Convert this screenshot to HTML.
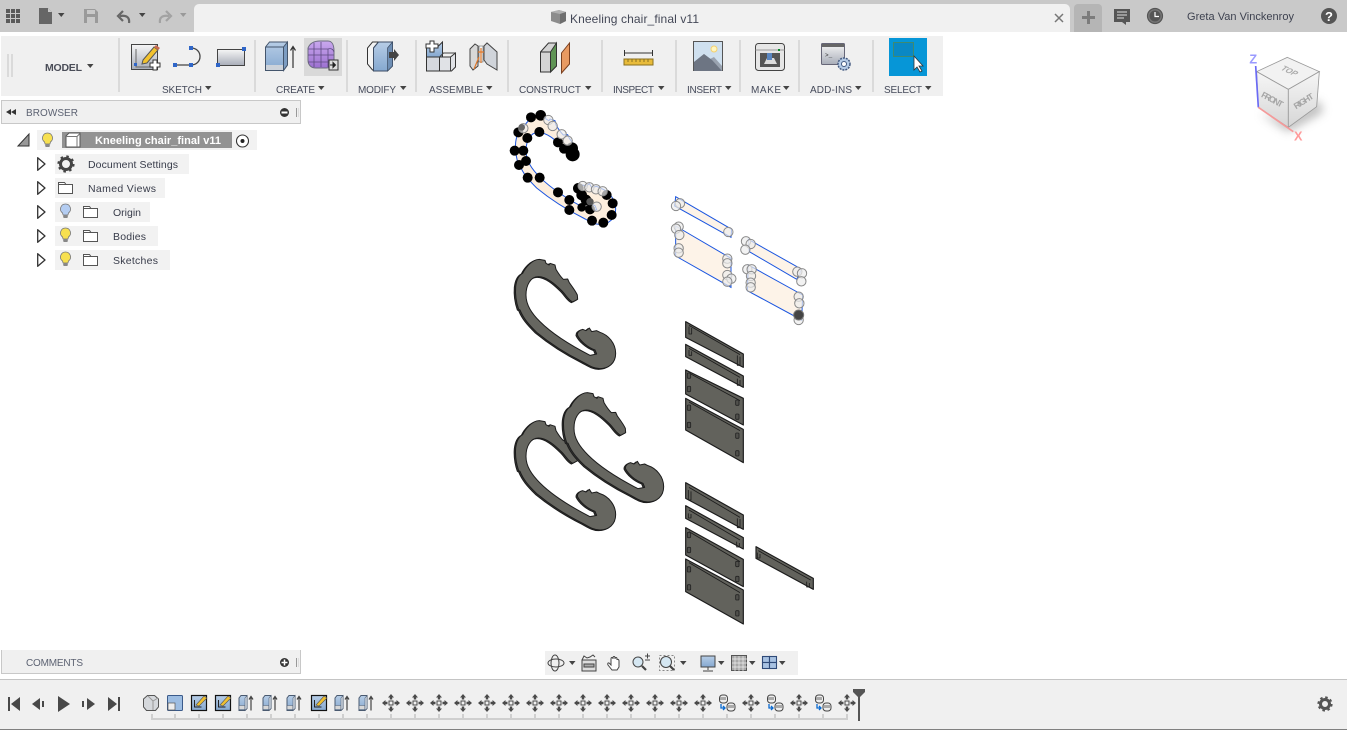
<!DOCTYPE html>
<html><head><meta charset="utf-8"><title>Kneeling chair_final v11</title>
<style>
html,body{margin:0;padding:0;background:#fff;width:1347px;height:730px;overflow:hidden}
svg{display:block;font-family:"Liberation Sans",sans-serif}
.l{font-size:10px;fill:#454a5a}
.t{font-size:10.5px;fill:#383c4a}
</style></head><body>
<svg width="1347" height="730" viewBox="0 0 1347 730" xmlns="http://www.w3.org/2000/svg">
<defs>
<linearGradient id="bl" x1="0" y1="0" x2="0" y2="1"><stop offset="0" stop-color="#b7cde6"/><stop offset="1" stop-color="#85a8d0"/></linearGradient>
<linearGradient id="gr" x1="0" y1="0" x2="0" y2="1"><stop offset="0" stop-color="#f6f6f6"/><stop offset="1" stop-color="#a8adb8"/></linearGradient>
<linearGradient id="pu" x1="0" y1="0" x2="0" y2="1"><stop offset="0" stop-color="#c9a8ee"/><stop offset="1" stop-color="#9c70d0"/></linearGradient>
<linearGradient id="cu" x1="0" y1="0" x2="0" y2="1"><stop offset="0" stop-color="#f6f6f6"/><stop offset="1" stop-color="#d6d6d6"/></linearGradient>
<filter id="bl4" x="-40%" y="-40%" width="180%" height="180%"><feGaussianBlur stdDeviation="14"/></filter>
<path id="c" stroke-linejoin="round" d="M118 478L135 481 138 490 147 495 150 490 165 495 168 508C175 520 182 530 190 538L203 537 208 548C218 562 226 572 232 585L233 598 218 606C205 600 198 585 185 572C165 552 140 530 115 530C92 530 78 555 78 585C78 615 95 640 120 665C150 695 200 730 270 766L290 762 285 750C262 742 240 722 232 705C232 695 240 690 248 688L258 692 268 684 275 695 290 692 300 697C325 705 347 730 347 760C347 790 325 806 300 806C280 806 265 795 250 787C200 762 150 730 110 697C85 672 70 655 60 630L56 628C48 605 45 585 47 560C50 535 58 525 68 520C75 505 95 478 118 478Z"/>
<g id="bulb"><path d="M0-7a5 5 0 0 1 3 9l-.6 2h-4.800l-.6-2a5 5 0 0 1 3-9z" stroke="#777" stroke-width=".8"/><rect x="-2.300" y="4" width="4.600" height="3" rx="1" fill="#888"/></g>
<path id="folder" fill="#fff" stroke="#555" d="M.5 1.500h6l1.500 2h6.500v9h-14z M.5 3.500h7.500"/>
<path id="tri" fill="#fff" stroke="#333" stroke-width="1.300" stroke-linejoin="round" d="M.7.700L8 7 .7 13.300z"/>
<path id="cr" fill="#444" d="M0 0h6.500l-3.250 4z"/>
<g id="mv" fill="#4a4a4a"><path d="M0-9l3 3.500h-1.800v2h-2.400v-2h-1.800z"/><path d="M0 9l3-3.500h-1.800v-2h-2.400v2h-1.800z"/><path d="M-9 0l3.500-3v1.800h2v2.400h-2v1.800z"/><path d="M9 0l-3.500-3v1.800h-2v2.400h2v1.800z"/><rect x="-2" y="-2" width="4" height="4" fill="none" stroke="#4a4a4a"/></g>
<g id="ex"><path d="M-7-5l2-2.500h6v13l-2 2h-6z" fill="url(#bl)" stroke="#4a5a70"/><path d="M-7 2.500h6v4h-6z" fill="#d8d8d8" stroke="#4a5a70" stroke-width=".6"/><path d="M-1-5l2-2.500v13l-2 2z" fill="#e0e6ee" stroke="#4a5a70" stroke-width=".6"/><path d="M5 7.500v-14m-2 3l2-3 2 3" fill="none" stroke="#444" stroke-width="1.200"/></g>
<g id="sk"><rect x="-7.500" y="-7.500" width="15" height="15" fill="url(#bl)" stroke="#111" stroke-width="1.200"/><path d="M-4.500-3v7h7" fill="none" stroke="#222"/><path d="M-3 2L5-7l3 2-8 8z" fill="#f0c030" stroke="#555" stroke-width=".6"/></g>
<g id="jt"><rect x="-7.500" y="-9" width="8" height="8" rx="3" fill="#eee" stroke="#444"/><rect x="-7" y="-7" width="6" height="3" fill="#aaa"/><rect x="0" y="-1" width="8" height="8" rx="3" fill="#eee" stroke="#444"/><rect x="1" y="1" width="6" height="3" fill="#aaa"/><path d="M-6 0v4h4m-2-2l2 2-2 2" fill="none" stroke="#0a6ad0" stroke-width="1.300"/></g>
<g id="sc"><circle r="14" fill="#ececec" fill-opacity=".7" stroke="#8a8a8a" stroke-width="3"/></g>
<g id="h"><rect x="-5" y="-8" width="10" height="16" rx="3" fill="#50504c" stroke="#222" stroke-width="2.500"/></g>
</defs>

<!-- title bar -->
<rect width="1347" height="32" fill="#c9c9c9"/>
<g fill="#5a5a5a"><rect x="6" y="9" width="4" height="4"/><rect x="11" y="9" width="4" height="4"/><rect x="16" y="9" width="4" height="4"/><rect x="6" y="14" width="4" height="4"/><rect x="11" y="14" width="4" height="4"/><rect x="16" y="14" width="4" height="4"/><rect x="6" y="19" width="4" height="4"/><rect x="11" y="19" width="4" height="4"/><rect x="16" y="19" width="4" height="4"/></g>
<path d="M39 8h9l4 4v12H39z" fill="#666"/><path d="M48 8v4h4" fill="#c9c9c9"/>
<use href="#cr" x="58" y="13" fill="#555"/>
<path d="M84 9h11l3 3v11H84z" fill="#9a9a9a"/><rect x="87" y="10" width="8" height="4" fill="#c9c9c9"/><rect x="87" y="17" width="8" height="6" fill="#c9c9c9"/>
<path d="M129 23c1-6-3-8-9-7m3-5l-5 5 5 5" fill="none" stroke="#666" stroke-width="2.200"/><use href="#cr" x="139" y="13"/>
<path d="M160 23c-1-6 3-8 9-7m-3-5l5 5-5 5" fill="none" stroke="#a2a2a2" stroke-width="2.200"/><path d="M180 13h6.500l-3.250 4z" fill="#999"/>
<path d="M194 32V9a5 5 0 0 1 5-5h866a5 5 0 0 1 5 5v23z" fill="#f1f1f1"/>
<path d="M551 12l8-2 7 2v9l-6 3-9-3z" fill="#8c8c8c"/><path d="M551 12l9 2 6-2-7-2z" fill="#b0b0b0"/><path d="M560 14v10l6-3v-9z" fill="#6d6d6d"/>
<text x="570" y="23" font-size="12" fill="#444857" textLength="129">Kneeling chair_final v11</text>
<path d="M1055 14l8 8m0-8l-8 8" stroke="#777" stroke-width="1.500"/>
<path d="M1074 32V8a4 4 0 0 1 4-4h20a4 4 0 0 1 4 4v24z" fill="#b5b5b5"/>
<path d="M1082 17.500h13M1088.500 11v13" stroke="#7c7c7c" stroke-width="3"/>
<path d="M1114 9h16v13h-4v3l-4-3h-8z" fill="#555"/><path d="M1117 12h10M1117 15h10M1117 18h7" stroke="#ddd"/>
<circle cx="1155" cy="16" r="7.500" fill="#777" stroke="#555" stroke-width="1.200"/><circle cx="1155" cy="16" r="5.500" fill="#555"/><path d="M1155 12v4.500h4" fill="none" stroke="#fff" stroke-width="1.200"/>
<text x="1187" y="20" font-size="11" fill="#3e4250" textLength="107">Greta Van Vinckenroy</text>
<circle cx="1329" cy="16" r="8" fill="#555"/><text x="1329" y="21" font-size="13" font-weight="bold" fill="#fff" text-anchor="middle">?</text>

<!-- toolbar -->
<rect x="1" y="36" width="942" height="60" fill="#f0f0f0"/>
<path d="M8 54v23M12 54v23" stroke="#c4c4c4"/>
<text x="45" y="71" font-size="10.500" font-weight="bold" fill="#4a4d58" textLength="37">MODEL</text><use href="#cr" x="87" y="64" fill="#333"/>
<g fill="#dadada"><rect x="118" y="38" width="2" height="54"/><rect x="254" y="40" width="2" height="52"/><rect x="346" y="40" width="2" height="52"/><rect x="415" y="40" width="2" height="52"/><rect x="507" y="40" width="2" height="52"/><rect x="601" y="40" width="2" height="52"/><rect x="675" y="40" width="2" height="52"/><rect x="739" y="40" width="2" height="52"/><rect x="798" y="40" width="2" height="52"/><rect x="872" y="40" width="2" height="52"/></g>

<g class="l">
<text class="l" x="162" y="93" textLength="40">SKETCH</text><use href="#cr" x="205" y="86"/>
<text class="l" x="276" y="93" textLength="39">CREATE</text><use href="#cr" x="318" y="86"/>
<text class="l" x="358" y="93" textLength="38">MODIFY</text><use href="#cr" x="400" y="86"/>
<text class="l" x="429" y="93" textLength="54">ASSEMBLE</text><use href="#cr" x="486" y="86"/>
<text class="l" x="519" y="93" textLength="62">CONSTRUCT</text><use href="#cr" x="585" y="86"/>
<text class="l" x="613" y="93" textLength="41">INSPECT</text><use href="#cr" x="658" y="86"/>
<text class="l" x="687" y="93" textLength="35">INSERT</text><use href="#cr" x="725" y="86"/>
<text class="l" x="751" y="93" textLength="30">MAKE</text><use href="#cr" x="783" y="86"/>
<text class="l" x="810" y="93" textLength="42">ADD-INS</text><use href="#cr" x="855" y="86"/>
<text class="l" x="884" y="93" textLength="38">SELECT</text><use href="#cr" x="925" y="86"/>
</g>

<!-- sketch icons -->
<rect x="131.500" y="44.500" width="26" height="25" fill="url(#gr)" stroke="#444"/>
<path d="M136 49v18h17" fill="none" stroke="#666"/><rect x="134" y="63" width="3" height="3" fill="#2f66c8"/>
<path d="M143 60l11-13 4 3-11 13-5 1z" fill="#f2c22e" stroke="#555"/><path d="M154 47l2-2 4 3-2 2z" fill="#c86a50"/>
<path d="M150 63h3v-3h4v3h3v4h-3v3h-4v-3h-3z" fill="#fff" stroke="#333"/>
<path d="M175 65h16M191 48c12 0 12 17 0 17" fill="none" stroke="#444" stroke-width="1.300"/>
<g fill="#2f66c8"><rect x="173" y="63" width="4" height="4"/><rect x="189" y="63" width="4" height="4"/><rect x="189" y="46" width="4" height="4"/></g>
<rect x="217.500" y="49.500" width="27" height="16" fill="url(#gr)" stroke="#444"/>
<rect x="216" y="63" width="4" height="4" fill="#2f66c8"/><rect x="242" y="47" width="4" height="4" fill="#2f66c8"/>

<!-- create icons -->
<path d="M265.500 47l4-5h18v23l-4 5.500h-18z" fill="url(#bl)" stroke="#44556c"/>
<path d="M283.500 47l4-5v23l-4 5.500z" fill="#7d9dc2" stroke="#44556c"/><path d="M265.500 47h18" stroke="#44556c"/>
<rect x="266" y="65" width="17" height="5" fill="#ccd2da"/>
<path d="M293 68V47m-2.500 3.500l2.500-4 2.500 4" fill="none" stroke="#333" stroke-width="1.200"/>
<rect x="304" y="38" width="38" height="38" fill="#d9d9d9"/>
<path d="M308 48c2-5 6-7 12-7h8c4 0 6 4 6 10v10c0 5-4 7-8 7h-10c-5 0-8-3-8-8z" fill="url(#pu)" stroke="#6d6d80"/>
<path d="M308 49h20v18M308 55h20M308 62h20M314 43v24M321 42v25M328 49c3-1 5 0 6 3M328 55h6M328 62h5" fill="none" stroke="#5d4a80" stroke-width=".8"/>
<rect x="329" y="60" width="9" height="10" fill="#ddd" stroke="#333"/><path d="M330 65h4m-1-2.500l2.500 2.500-2.500 2.500z" fill="#222" stroke="#222"/>

<!-- modify -->
<path d="M367.500 64V48l5-6h6l-5 6v22h-1z" fill="#f4f4f4" stroke="#333"/>
<path d="M373.500 48l5-6h14v24l-5 5h-14z" fill="url(#bl)" stroke="#3d4d65"/><path d="M387.500 48l5-6v24l-5 5z" fill="#6f8fb5" stroke="#3d4d65" stroke-width=".7"/>
<path d="M389 52h5v-3l5 6-5 6v-3h-5z" fill="#444"/>

<!-- assemble -->
<path d="M426.500 57V47h11l5-5v15z" fill="url(#bl)" stroke="#333"/>
<path d="M426.500 57h13v14h-13z" fill="#d5d8de" stroke="#333"/><path d="M439.500 57h11l5-4v14l-4 4h-12z" fill="#e0e2e6" stroke="#333"/>
<path d="M439.500 57l4-4h12M450.500 57v14" fill="none" stroke="#444"/>
<path d="M426 44h4v-3h4v3h4v4h-4v4h-4v-4h-4z" fill="#fff" stroke="#333"/>
<path d="M470 49l5-5 3 2v20l-5 4-3-4z" fill="#d8d8d8" stroke="#444"/><path d="M484 60v-14l3-3 10 9v18l-10-6z" fill="#d0d4da" stroke="#444"/>
<path d="M479 46h4v16h-4z" fill="#f4f4f4" stroke="#555" stroke-width=".6"/>
<path d="M481 48v15M478 52h6M479 57l-5 12" stroke="#e0782a" stroke-width="1.200" fill="none"/>

<!-- construct -->
<path d="M540.500 52l8-9h8v23l-6 6h-10z" fill="#d4d4d4" stroke="#333"/><path d="M550.500 52h-10" stroke="#333"/>
<path d="M550.500 52l6-9v23l-6 6z" fill="#5f9455" stroke="#333"/>
<path d="M561.500 53l8-10v21l-8 9z" fill="#e89a62" stroke="#7a4020"/>

<!-- inspect -->
<path d="M624.500 50v6M652.500 50v6M624.500 53h28" stroke="#333" fill="none"/>
<rect x="624" y="59" width="29" height="6" fill="#e8bb3a" stroke="#8a7020"/>
<path d="M628 59v3M632 59v3M636 59v3M640 59v3M644 59v3M648 59v3" stroke="#8a7020"/>

<!-- insert -->
<rect x="693.500" y="41.500" width="29" height="29" fill="#cfe0ef" stroke="#555"/>
<path d="M694 71V62l10-8 6 5 4-2 8 9v5z" fill="#9aa3b0"/><path d="M694 71V62l10-8 8 6 10 11z" fill="#6d7583"/>
<circle cx="714" cy="49" r="3" fill="#fff6c0" stroke="#f4d070"/>

<!-- make -->
<rect x="755.500" y="43.500" width="29" height="27" rx="3" fill="#e6e6e6" stroke="#444"/><path d="M755.500 50h29" stroke="#999"/>
<rect x="760" y="53" width="20" height="14" fill="#555"/><path d="M764 64l3-6h7l3 6z" fill="#ddd"/><rect x="767" y="53" width="5" height="7" fill="#5a86c0"/><rect x="778" y="49" width="2" height="2" fill="#0a8a2a"/>

<!-- add-ins -->
<rect x="821.500" y="43.500" width="23" height="21" rx="1" fill="url(#gr)" stroke="#667"/><rect x="822" y="44" width="22" height="3" fill="#666"/>
<text x="825" y="57" font-size="6" fill="#333" font-family="Liberation Mono">&gt;_</text>
<circle cx="844" cy="64" r="6" fill="#b5cbe6" stroke="#445a80" stroke-width="1.500" stroke-dasharray="2 1"/><circle cx="844" cy="64" r="2.500" fill="#fff" stroke="#445a80"/>

<!-- select -->
<rect x="889" y="38" width="38" height="38" fill="#0696d7"/>
<rect x="893.500" y="42.500" width="20" height="14" fill="#0a88c4" stroke="#3f8a70"/>
<path d="M914 56v14l3-3 3 5 2-1-3-5h4z" fill="#fff" stroke="#333" stroke-width=".8"/>

<!-- browser -->
<rect x="1.500" y="100.500" width="299" height="23" fill="#f0f0f0" stroke="#c8c8c8"/>
<path d="M6 112l5-3v6zM11 112l5-3v6z" fill="#333"/>
<text x="26" y="116" font-size="10" fill="#5c6272" textLength="52">BROWSER</text>
<circle cx="284.500" cy="112.500" r="4.500" fill="#333"/><rect x="281.500" y="111.500" width="6" height="2" fill="#fff"/>
<path d="M296.500 108v9" stroke="#999"/><path d="M298.500 108v9" stroke="#ddd"/>

<rect x="37" y="130" width="220" height="20" fill="#f2f2f2"/>
<path d="M18 146l11-12v12z" fill="#999" stroke="#333"/>
<use href="#bulb" x="47.500" y="140" fill="#f7e050"/>
<rect x="62" y="132" width="170" height="16" fill="#929292"/>
<path d="M66 136l3-3h11v14H66z" fill="#fff" stroke="#555"/><path d="M66 136.500h11v10.500M77 136.500l3-3" stroke="#777" fill="none"/>
<text x="95" y="144" font-size="11" font-weight="bold" fill="#fff" textLength="126">Kneeling chair_final v11</text>
<circle cx="242.500" cy="141" r="6" fill="#fff" stroke="#333" stroke-width="1.100"/><circle cx="242.500" cy="141" r="2" fill="#222"/>

<rect x="55" y="154" width="134" height="20" fill="#f2f2f2"/><use href="#tri" x="37" y="157"/>
<circle cx="66" cy="164" r="5.500" fill="none" stroke="#444" stroke-width="3"/><circle cx="66" cy="164" r="7.500" fill="none" stroke="#444" stroke-width="2.200" stroke-dasharray="2.500 3.400"/>
<text class="t" x="88" y="168" textLength="90">Document Settings</text>

<rect x="55" y="178" width="110" height="20" fill="#f2f2f2"/><use href="#tri" x="37" y="181"/>
<use href="#folder" x="58" y="181"/>
<text class="t" x="88" y="192" textLength="68">Named Views</text>

<rect x="55" y="202" width="95" height="20" fill="#f2f2f2"/><use href="#tri" x="37" y="205"/>
<use href="#bulb" x="65.500" y="211" fill="#b4cdf2"/><use href="#folder" x="83" y="205"/>
<text class="t" x="113" y="216" textLength="28">Origin</text>

<rect x="55" y="226" width="103" height="20" fill="#f2f2f2"/><use href="#tri" x="37" y="229"/>
<use href="#bulb" x="65.500" y="235" fill="#f7e050"/><use href="#folder" x="83" y="229"/>
<text class="t" x="113" y="240" textLength="33">Bodies</text>

<rect x="55" y="250" width="115" height="20" fill="#f2f2f2"/><use href="#tri" x="37" y="253"/>
<use href="#bulb" x="65.500" y="259" fill="#f7e050"/><use href="#folder" x="83" y="253"/>
<text class="t" x="113" y="264" textLength="45">Sketches</text>

<!-- comments -->
<path d="M1.500 650v23.500h299V650" fill="#f0f0f0" stroke="#c8c8c8"/>
<text x="26" y="666" font-size="10" fill="#5c6272" textLength="57">COMMENTS</text>
<circle cx="284.500" cy="662.500" r="4.500" fill="#333"/><path d="M281.500 662.500h6M284.500 659.500v6" stroke="#fff" stroke-width="1.500"/>
<path d="M296.500 658v9" stroke="#999"/><path d="M298.500 658v9" stroke="#ddd"/>

<!-- viewcube -->
<g transform="translate(1040 0) scale(.33333)">
<path d="M660 330L745 385 850 325 835 290 745 350z" fill="#777" opacity=".5" filter="url(#bl4)" transform="translate(0 10)"/>
<path d="M742 172L838 215 745 268 650 215z" fill="#f2f2f2" stroke="#999" stroke-width="2.500"/>
<path d="M650 215L745 268 745 382 655 322z" fill="url(#cu)" stroke="#999" stroke-width="2.500"/>
<path d="M745 268L838 215 830 320 745 382z" fill="url(#cu)" stroke="#999" stroke-width="2.500"/>
<text transform="translate(720 208) rotate(25) skewX(-25)" font-size="24" fill="#aaa" font-weight="bold">TOP</text>
<text transform="translate(662 290) rotate(28)" font-size="26" fill="#a5a5a5" font-weight="bold" textLength="70">FRONT</text>
<text transform="translate(768 328) rotate(-32)" font-size="26" fill="#a5a5a5" font-weight="bold" textLength="65">RIGHT</text>
<path d="M647 198L655 322" stroke="#6a6af5" stroke-width="5"/>
<path d="M655 322L760 395" stroke="#f59a9a" stroke-width="5"/>
<text x="628" y="190" font-size="38" font-weight="bold" fill="#9a9aff">Z</text>
<text x="762" y="422" font-size="38" font-weight="bold" fill="#ff9a9a">X</text>
</g>

<!-- sketch C -->
<g transform="translate(500 100) scale(.33333)">
<use href="#c" x="0" y="-433" fill="#fdeedd" stroke="#1a55e0" stroke-width="3"/>
<g fill="#000">
<circle cx="93" cy="52" r="15"/><circle cx="122" cy="46" r="16"/><circle cx="55" cy="97" r="15"/><circle cx="118" cy="96" r="15"/><circle cx="82" cy="114" r="15"/><circle cx="44" cy="152" r="15"/><circle cx="70" cy="152" r="15"/><circle cx="78" cy="183" r="15"/><circle cx="57" cy="195" r="15"/><circle cx="83" cy="233" r="15"/><circle cx="119" cy="233" r="15"/><circle cx="174" cy="277" r="15"/><circle cx="208" cy="300" r="15"/><circle cx="208" cy="330" r="15"/><circle cx="174" cy="127" r="15"/><circle cx="192" cy="146" r="15"/><circle cx="216" cy="145" r="18"/><circle cx="218" cy="163" r="21"/>
<circle cx="235" cy="265" r="16"/><circle cx="245" cy="285" r="16"/><circle cx="258" cy="300" r="16"/><circle cx="245" cy="322" r="13"/><circle cx="270" cy="328" r="15"/><circle cx="320" cy="285" r="15"/><circle cx="338" cy="310" r="15"/><circle cx="335" cy="345" r="15"/><circle cx="310" cy="368" r="15"/><circle cx="276" cy="362" r="15"/>
</g>
<use href="#sc" x="145" y="60"/><use href="#sc" x="158" y="78"/><use href="#sc" x="185" y="103"/><use href="#sc" x="203" y="122"/><use href="#sc" x="70" y="85"/><use href="#sc" x="248" y="258"/><use href="#sc" x="268" y="262"/><use href="#sc" x="288" y="268"/><use href="#sc" x="308" y="274"/><use href="#sc" x="290" y="320"/>
<circle cx="270" cy="305" r="11" fill="#555"/><circle cx="65" cy="82" r="10" fill="#666"/>

<!-- sketch rects -->
<g fill="#fdf3e8" stroke="#1a55e0" stroke-width="3">
<path d="M527 290L695 388 693 412 524 318z"/>
<path d="M527 378L693 475 693 562 527 468z"/>
<path d="M745 418L905 508 890 538 748 455z"/>
<path d="M745 495L908 585 905 660 742 572z"/>
</g>
<use href="#sc" x="540" y="310"/><use href="#sc" x="528" y="318"/><use href="#sc" x="685" y="396"/><use href="#sc" x="536" y="380"/><use href="#sc" x="528" y="386"/><use href="#sc" x="538" y="405"/><use href="#sc" x="536" y="445"/><use href="#sc" x="536" y="458"/><use href="#sc" x="682" y="476"/><use href="#sc" x="682" y="490"/><use href="#sc" x="682" y="525"/><use href="#sc" x="694" y="536"/><use href="#sc" x="682" y="545"/>
<use href="#sc" x="738" y="424"/><use href="#sc" x="752" y="432"/><use href="#sc" x="736" y="449"/><use href="#sc" x="892" y="515"/><use href="#sc" x="906" y="520"/><use href="#sc" x="904" y="544"/>
<use href="#sc" x="742" y="508"/><use href="#sc" x="755" y="508"/><use href="#sc" x="753" y="528"/><use href="#sc" x="752" y="548"/><use href="#sc" x="752" y="562"/><use href="#sc" x="896" y="590"/><use href="#sc" x="898" y="610"/><use href="#sc" x="896" y="660"/>
<circle cx="896" cy="645" r="15" fill="#444" stroke="#777" stroke-width="3"/>
</g>

<!-- solid C shapes -->
<g transform="translate(500 100) scale(.33333)" fill="#3a3a38" stroke="#1c1c1c" stroke-width="3">
<use href="#c" x="-4" y="2"/><use href="#c" fill="#666660"/>
<g transform="translate(0 484)"><use href="#c" x="-4" y="2"/><use href="#c" fill="#666660"/></g>
<g transform="translate(144 400)"><use href="#c" x="-4" y="2"/><use href="#c" fill="#666660"/></g>
</g>

<!-- plates -->
<g transform="translate(500 370) scale(.33333)" fill="#62625c" stroke="#1c1c1c" stroke-width="3.500" stroke-linejoin="round">
<path d="M557-145L730-48 730-8 557-98z"/><path d="M567-134L720-46M567-130v22h8v-18M712-44v30h8v-26" fill="none" stroke-width="2.500"/>
<path d="M557-77L730 18 730 52 557-40z"/><path d="M567-65L720 22M567-60v16h8v-12M712 26v20h8v-16" fill="none" stroke-width="2.500"/>
<path d="M557 0L730 85 730 165 557 72z"/><path d="M567 9L720 92" fill="none" stroke-width="2.500"/>
<use href="#h" x="567" y="17"/><use href="#h" x="567" y="57"/><use href="#h" x="712" y="98"/><use href="#h" x="712" y="140"/>
<path d="M557 85L730 178 730 278 557 180z"/><path d="M567 96L720 182" fill="none" stroke-width="2.500"/>
<use href="#h" x="567" y="113"/><use href="#h" x="567" y="165"/><use href="#h" x="712" y="197"/><use href="#h" x="712" y="250"/>
<path d="M557 338L730 435 730 478 557 385z"/><path d="M567 352L720 442M565 360v30h8v-26M712 445v28h8v-26" fill="none" stroke-width="2.500"/>
<path d="M557 407L730 503 730 537 557 445z"/><path d="M567 420L720 510M565 430v14h8v-12M710 515v16h8v-12" fill="none" stroke-width="2.500"/>
<path d="M557 473L730 568 730 650 557 555z"/><path d="M567 485L720 575" fill="none" stroke-width="2.500"/>
<use href="#h" x="567" y="495"/><use href="#h" x="567" y="540"/><use href="#h" x="712" y="582"/><use href="#h" x="712" y="627"/>
<path d="M557 567L730 660 730 762 557 665z"/><path d="M567 578L720 668" fill="none" stroke-width="2.500"/>
<use href="#h" x="567" y="598"/><use href="#h" x="567" y="652"/><use href="#h" x="712" y="682"/><use href="#h" x="712" y="730"/>
<path d="M768 530L940 625 940 658 768 565z"/><path d="M775 542L932 630M772 548v16h8v-12M920 635v16h8v-12" fill="none" stroke-width="2.500"/>
</g>

<!-- view toolbar -->
<rect x="545" y="651" width="253" height="24" fill="#f0f0f0"/>
<g fill="none" stroke="#444">
<ellipse cx="556" cy="663" rx="8" ry="4"/><ellipse cx="555" cy="663" rx="4" ry="8"/>
<rect x="582" y="660" width="14" height="11" fill="#ddd"/><rect x="584" y="664" width="10" height="3" fill="#aaa"/><path d="M582 660l2-4 3 2 3-1 3-2 2 2"/>
<path d="M612 670l-4-5c-1-2 1-3 2-1l1 1v-6c0-2 2-2 2 0v-1c0-2 2-2 2 0v1c0-2 2-2 2 0v1c0-1 2-1 2 1v6l-2 3z" fill="#fff"/>
<circle cx="638" cy="662" r="5" fill="#d5e7f2"/><path d="M642 666l4 4" stroke-width="2.200"/><path d="M645 656h5M647.500 653.500v5M645 660h5"/>
<rect x="659.500" y="655.500" width="15" height="15" stroke-dasharray="2 2" stroke="#888"/><circle cx="666" cy="662" r="5.500" fill="#d5e7f2"/><path d="M670 666l4 4" stroke-width="2.200"/>
<rect x="701" y="656" width="14" height="11" fill="url(#bl)"/><path d="M708 667v3M703 671h10"/>
</g>
<use href="#cr" x="569" y="661"/><use href="#cr" x="680" y="661"/><use href="#cr" x="718" y="661"/><use href="#cr" x="749" y="661"/><use href="#cr" x="779" y="661"/>
<rect x="731.500" y="655.500" width="15" height="15" fill="#a8a8a8" stroke="#555"/>
<path d="M735 656v15M739 656v15M743 656v15M732 659h15M732 663h15M732 667h15" stroke="#eee" stroke-width=".7"/>
<g fill="#a8c2e2" stroke="#2f4a78" stroke-width="1.100"><rect x="762.500" y="656.500" width="7" height="6"/><rect x="769.500" y="656.500" width="7" height="6"/><rect x="762.500" y="662.500" width="7" height="6"/><rect x="769.500" y="662.500" width="7" height="6"/></g>

<!-- timeline -->
<rect x="0" y="680" width="1347" height="49" fill="#f0f0f0"/>
<rect x="0" y="679" width="1347" height="1" fill="#c4c4c4"/>
<rect x="0" y="729" width="1347" height="1" fill="#808080"/>
<g fill="#484848">
<rect x="8" y="697" width="2" height="14"/><path d="M20 697v14l-9-7z"/>
<path d="M32 704l8-6v12z"/><rect x="42" y="701" width="2" height="6"/>
<path d="M58 696l12 8-12 8z"/>
<rect x="82" y="701" width="2" height="6"/><path d="M95 704l-8-6v12z"/>
<path d="M108 697l9 7-9 7z"/><rect x="118" y="697" width="2" height="14"/>
</g>
<path d="M152 714v5h695v-5M175 714v5M199 714v5M223 714v5M247 714v5M271 714v5M295 714v5M319 714v5M343 714v5M367 714v5M391 714v5M415 714v5M439 714v5M463 714v5M487 714v5M511 714v5M535 714v5M559 714v5M583 714v5M607 714v5M631 714v5M655 714v5M679 714v5M703 714v5M727 714v5M751 714v5M775 714v5M799 714v5M823 714v5" fill="none" stroke="#cfcfcf" stroke-width="2"/>
<path d="M143.500 699l4-3.500h7l4 3.500v8l-3 3.500h-9l-3-3.500z" fill="#d5d8dc" stroke="#555"/><path d="M148 696l5 5 5-3M153 701v9" fill="none" stroke="#999"/>
<rect x="167.500" y="695.500" width="15" height="15" rx="1" fill="#9dbde2" stroke="#3a5a8a"/><rect x="168" y="703" width="7" height="7" fill="#eee" stroke="#555" stroke-width=".7"/>
<use href="#sk" x="199" y="703"/><use href="#sk" x="223" y="703"/><use href="#ex" x="246" y="703"/><use href="#ex" x="270" y="703"/><use href="#ex" x="294" y="703"/><use href="#sk" x="319" y="703"/><use href="#ex" x="342" y="703"/><use href="#ex" x="366" y="703"/>
<use href="#mv" x="391" y="703"/><use href="#mv" x="415" y="703"/><use href="#mv" x="439" y="703"/><use href="#mv" x="463" y="703"/><use href="#mv" x="487" y="703"/><use href="#mv" x="511" y="703"/><use href="#mv" x="535" y="703"/><use href="#mv" x="559" y="703"/><use href="#mv" x="583" y="703"/><use href="#mv" x="607" y="703"/><use href="#mv" x="631" y="703"/><use href="#mv" x="655" y="703"/><use href="#mv" x="679" y="703"/><use href="#mv" x="703" y="703"/>
<use href="#jt" x="727" y="704"/><use href="#mv" x="751" y="703"/><use href="#jt" x="775" y="704"/><use href="#mv" x="799" y="703"/><use href="#jt" x="823" y="704"/><use href="#mv" x="847" y="703"/>
<path d="M853 689h12v3l-5 5v24h-2V697l-5-5z" fill="#555"/>
<circle cx="1325" cy="704" r="4.500" fill="none" stroke="#555" stroke-width="3"/><circle cx="1325" cy="704" r="6.500" fill="none" stroke="#555" stroke-width="2.200" stroke-dasharray="2.500 2.600"/>
</svg>
</body></html>
